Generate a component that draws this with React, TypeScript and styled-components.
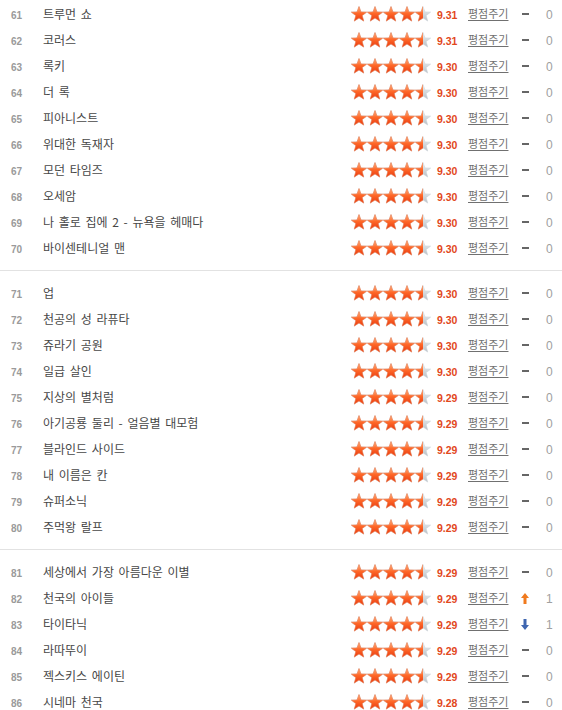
import React from "react";
import styled, { createGlobalStyle } from "styled-components";

const Global = createGlobalStyle`
  html, body { margin: 0; padding: 0; overflow: hidden; background: #fff; }
  body { font-family: "Noto Sans CJK KR", "Noto Sans", sans-serif; }
`;

type Change = "none" | "up" | "down";
type Movie = { rank: number; title: string; score: number; change: Change; delta: number };

const raw: [string, number, Change?, number?][] = [
  ["트루먼 쇼", 9.31],
  ["코러스", 9.31],
  ["록키", 9.3],
  ["더 록", 9.3],
  ["피아니스트", 9.3],
  ["위대한 독재자", 9.3],
  ["모던 타임즈", 9.3],
  ["오세암", 9.3],
  ["나 홀로 집에 2 - 뉴욕을 헤매다", 9.3],
  ["바이센테니얼 맨", 9.3],
  ["업", 9.3],
  ["천공의 성 라퓨타", 9.3],
  ["쥬라기 공원", 9.3],
  ["일급 살인", 9.3],
  ["지상의 별처럼", 9.29],
  ["아기공룡 둘리 - 얼음별 대모험", 9.29],
  ["블라인드 사이드", 9.29],
  ["내 이름은 칸", 9.29],
  ["슈퍼소닉", 9.29],
  ["주먹왕 랄프", 9.29],
  ["세상에서 가장 아름다운 이별", 9.29],
  ["천국의 아이들", 9.29, "up", 1],
  ["타이타닉", 9.29, "down", 1],
  ["라따뚜이", 9.29],
  ["젝스키스 에이틴", 9.29],
  ["시네마 천국", 9.28],
];

const movies: Movie[] = raw.map(([title, score, change, delta], i) => ({
  rank: 61 + i,
  title,
  score,
  change: change ?? "none",
  delta: delta ?? 0,
}));

const groups: Movie[][] = [movies.slice(0, 10), movies.slice(10, 20), movies.slice(20)];

const List = styled.div`
  width: 562px;
`;

const Group = styled.div`
  padding: 9px 0;
  border-bottom: 1px solid #e2e2e2;
  &:first-child { padding-top: 1px; }
  &:last-child { border-bottom: none; }
`;

const Row = styled.div`
  display: grid;
  grid-template-columns: 43px 1fr 86px 31px 42px 30px 22px;
  align-items: center;
  height: 26px;
`;

const Rank = styled.span`
  padding-left: 11px;
  font-family: "Liberation Sans", Arial, sans-serif;
  font-weight: bold;
  font-size: 10px;
  color: #9a9a9a;
  padding-top: 2px;
`;

const Title = styled.span`
  font-family: "Noto Sans CJK KR", sans-serif;
  font-size: 12px;
  color: #474747;
  white-space: nowrap;
  word-spacing: 2px;
  margin-top: -2px;
`;

const Stars = styled.div`
  position: relative;
  width: 80px;
  height: 16px;
`;

const StarLayer = styled.div`
  position: absolute;
  left: 0;
  top: 0;
  height: 16px;
  overflow: hidden;
`;

const Score = styled.span`
  font-family: "Liberation Sans", Arial, sans-serif;
  font-weight: bold;
  font-size: 10.5px;
  color: #e2471b;
  padding-top: 1px;
`;

const RateLink = styled.a`
  font-family: "Noto Sans CJK KR", sans-serif;
  font-size: 11px;
  color: #707070;
  text-decoration: underline;
  text-underline-offset: 2px;
  white-space: nowrap;
  margin-top: -3px;
  cursor: pointer;
`;

const ChangeCell = styled.span`
  display: flex;
  justify-content: center;
  align-items: center;
  height: 16px;
`;

const Dash = styled.span`
  width: 7px;
  height: 2px;
  background: #666;
`;

const Count = styled.span`
  padding-left: 6px;
  font-family: "Liberation Sans", Arial, sans-serif;
  font-size: 12px;
  color: #a0a0a0;
  padding-top: 2px;
`;

const STAR =
  "8,0.6 9.94,5.93 15.61,6.13 11.14,9.62 12.7,15.07 8,11.9 3.3,15.07 4.86,9.62 0.39,6.13 6.06,5.93";

const StarStrip: React.FC<{ on: boolean }> = ({ on }) => (
  <svg width="80" height="16" viewBox="0 0 80 16" style={{ display: "block" }}>
    <defs>
      <linearGradient id="starOn" x1="0" y1="0" x2="0" y2="1">
        <stop offset="0" stopColor="#ffb98a" />
        <stop offset="0.45" stopColor="#ff6a2a" />
        <stop offset="1" stopColor="#e8380e" />
      </linearGradient>
      <linearGradient id="starOff" x1="0" y1="0" x2="0" y2="1">
        <stop offset="0" stopColor="#eef1f3" />
        <stop offset="1" stopColor="#b9c0c6" />
      </linearGradient>
    </defs>
    {[0, 1, 2, 3, 4].map((i) => (
      <polygon
        key={i}
        points={STAR}
        transform={`translate(${i * 16} 0)`}
        fill={on ? "url(#starOn)" : "url(#starOff)"}
        stroke={on ? "#f0784a" : "#cdd3d8"}
        strokeWidth="0.6"
        strokeLinejoin="round"
      />
    ))}
  </svg>
);

const Arrow: React.FC<{ dir: "up" | "down" }> = ({ dir }) => (
  <svg width="8" height="11" viewBox="0 0 8 11">
    {dir === "up" ? (
      <path d="M4 0 L8 5 L5.5 5 L5.5 11 L2.5 11 L2.5 5 L0 5 Z" fill="#f07a1e" />
    ) : (
      <path d="M4 11 L8 6 L5.5 6 L5.5 0 L2.5 0 L2.5 6 L0 6 Z" fill="#3f66b0" />
    )}
  </svg>
);

const MovieRow: React.FC<{ m: Movie }> = ({ m }) => (
  <Row>
    <Rank>{m.rank}</Rank>
    <Title>{m.title}</Title>
    <Stars>
      <StarStrip on={false} />
      <StarLayer style={{ width: `${Math.round(m.score * 8 - 2)}px` }}>
        <StarStrip on />
      </StarLayer>
    </Stars>
    <Score>{m.score.toFixed(2)}</Score>
    <RateLink>평점주기</RateLink>
    <ChangeCell>{m.change === "none" ? <Dash /> : <Arrow dir={m.change} />}</ChangeCell>
    <Count>{m.delta}</Count>
  </Row>
);

export default function App() {
  return (
    <>
      <Global />
      <List>
        {groups.map((g, gi) => (
          <Group key={gi}>
            {g.map((m) => (
              <MovieRow key={m.rank} m={m} />
            ))}
          </Group>
        ))}
      </List>
    </>
  );
}
